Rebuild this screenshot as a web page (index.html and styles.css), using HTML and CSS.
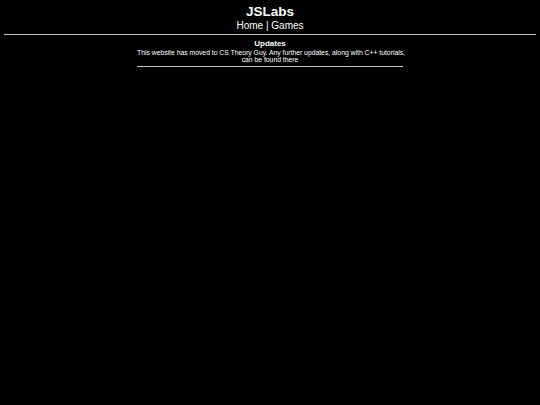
FILE: index.html
```html
<!DOCTYPE html>
<html lang="en">
<head>
  <meta charset="UTF-8">
  <title>JSLabs</title>
  <link rel="stylesheet" href="styles.css">
</head>
<body>
<header class="top">
  <h1>JSLabs</h1>
  <nav class="nav">Home | Games</nav>
</header>
<hr class="rule">

<section class="updates">
  <h3>Updates</h3>
  <p>This website has moved to CS Theory Guy. Any further updates, along with C++ tutorials,<br>can be found there</p>
  <hr class="rule">
</section>
</body>
</html>
```

FILE: styles.css
```css
body {
  margin: 0;
  padding: 4px 4px;
  background: #000000;
  color: #ffffff;
  font-family: 'Liberation Sans', Arial, sans-serif;
  text-align: center;
}

.top h1 {
  margin: 0;
  font-size: 13.5px;
  line-height: 16px;
}

.nav {
  font-size: 10px;
  line-height: 12px;
}

.rule {
  margin: 2px 0 0;
  border: 0;
  border-top: 1px solid #c8c8c8;
}

.updates {
  width: 266px;
  margin: 3px auto 0;
}

.updates .rule {
  margin-top: 3px;
}

.updates h3 {
  margin: 0;
  font-size: 8px;
  line-height: 11px;
}

.updates p {
  margin: 0;
  font-size: 6.8px;
  line-height: 7px;
  white-space: nowrap;
}
```
